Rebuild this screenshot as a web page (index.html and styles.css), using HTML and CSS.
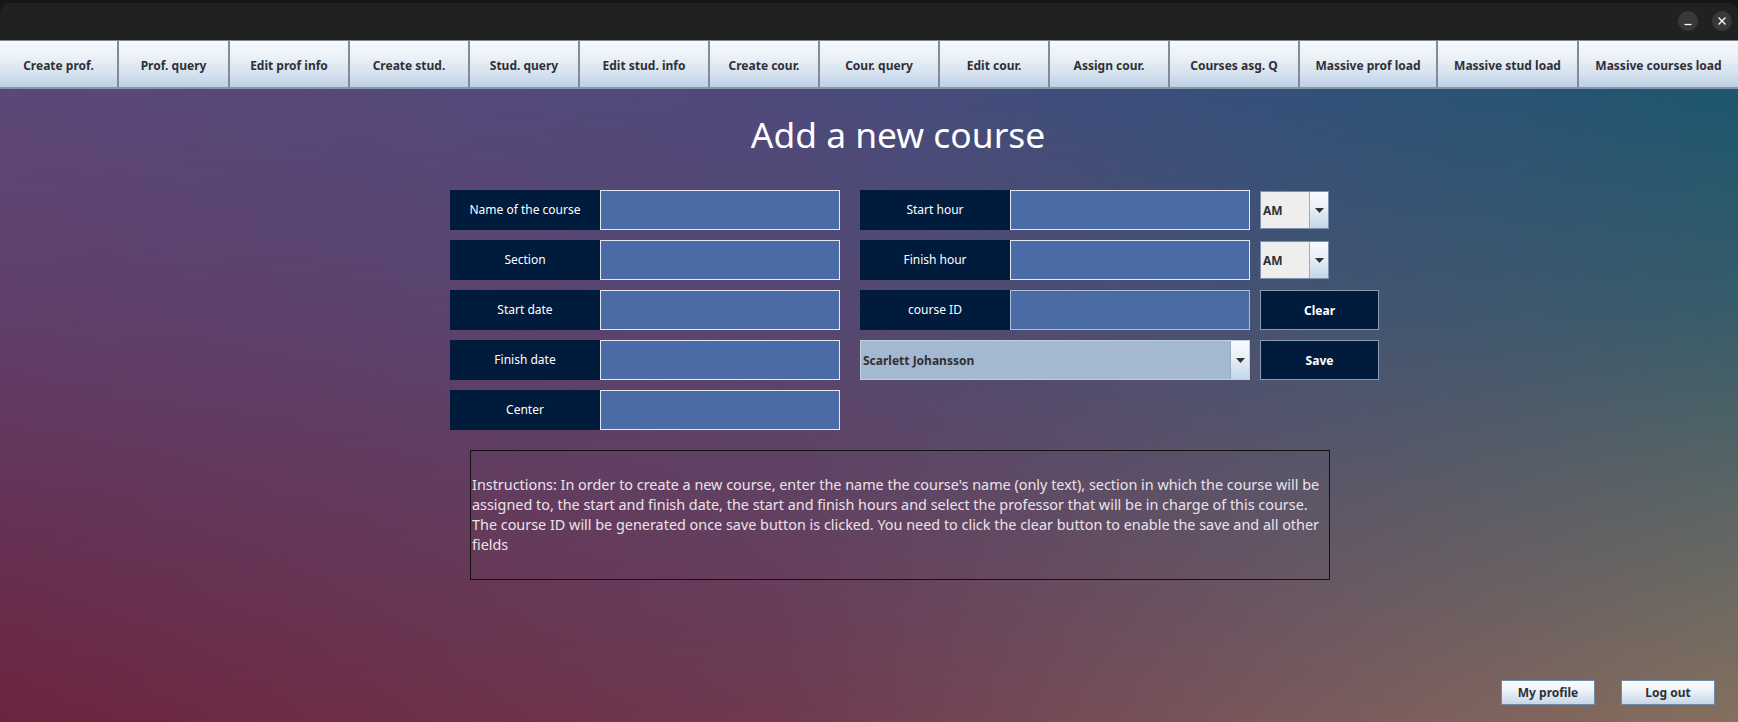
FILE: index.html
```html
<!DOCTYPE html>
<html lang="en">
<head>
<meta charset="utf-8">
<title>Add a new course</title>
<link rel="stylesheet" href="styles.css">
</head>
<body>
<div class="window">
  <header class="titlebar">
    <div class="titlebar-inner">
      <div class="win-controls">
        <span class="wc" aria-label="Minimize">
          <svg width="20" height="20" viewBox="0 0 20 20"><line x1="6.5" y1="13.5" x2="13.5" y2="13.5" stroke="#ffffff" stroke-width="1.3"/></svg>
        </span>
        <span class="wc" aria-label="Close">
          <svg width="20" height="20" viewBox="0 0 20 20"><path d="M6.5 6.5 L13.5 13.5 M13.5 6.5 L6.5 13.5" stroke="#ffffff" stroke-width="1.3" fill="none"/></svg>
        </span>
      </div>
    </div>
  </header>

  <nav class="tabs">
    <span class="tab">Create prof.</span>
    <span class="tab">Prof. query</span>
    <span class="tab">Edit prof info</span>
    <span class="tab">Create stud.</span>
    <span class="tab">Stud. query</span>
    <span class="tab">Edit stud. info</span>
    <span class="tab">Create cour.</span>
    <span class="tab">Cour. query</span>
    <span class="tab">Edit cour.</span>
    <span class="tab">Assign cour.</span>
    <span class="tab">Courses asg. Q</span>
    <span class="tab">Massive prof load</span>
    <span class="tab">Massive stud load</span>
    <span class="tab">Massive courses load</span>
  </nav>

  <main class="content">
    <h1 class="title">Add a new course</h1>

    <div class="form">
      <div class="grid-left">
        <div class="label">Name of the course</div>
        <div class="input"></div>
        <div class="label">Section</div>
        <div class="input"></div>
        <div class="label">Start date</div>
        <div class="input"></div>
        <div class="label">Finish date</div>
        <div class="input"></div>
        <div class="label">Center</div>
        <div class="input"></div>
      </div>

      <div class="grid-right">
        <div class="label">Start hour</div>
        <div class="input"></div>
        <div class="combo ampm side">
          <span class="combo-value">AM</span>
          <span class="combo-arrow"><svg width="9" height="5" viewBox="0 0 9 5"><path d="M0 0 H9 L4.5 5 Z" fill="#333333"/></svg></span>
        </div>

        <div class="label">Finish hour</div>
        <div class="input"></div>
        <div class="combo ampm side">
          <span class="combo-value">AM</span>
          <span class="combo-arrow"><svg width="9" height="5" viewBox="0 0 9 5"><path d="M0 0 H9 L4.5 5 Z" fill="#333333"/></svg></span>
        </div>

        <div class="label">course ID</div>
        <div class="input input-disabled"></div>
        <div class="dark-btn side">Clear</div>

        <div class="combo prof">
          <span class="combo-value">Scarlett Johansson</span>
          <span class="combo-arrow"><svg width="9" height="5" viewBox="0 0 9 5"><path d="M0 0 H9 L4.5 5 Z" fill="#333333"/></svg></span>
        </div>
        <div class="dark-btn side">Save</div>
      </div>
    </div>

    <div class="instructions">
      <p>Instructions: In order to create a new course, enter the name the course's name (only text), section in which the course will be<br>assigned to, the start and finish date, the start and finish hours and select the professor that will be in charge of this course.<br>The course ID will be generated once save button is clicked. You need to click the clear button to enable the save and all other<br>fields</p>
    </div>

    <div class="footer">
      <span class="light-btn">My profile</span>
      <span class="light-btn">Log out</span>
    </div>
  </main>
</div>
</body>
</html>
```

FILE: styles.css
```css
* {
  box-sizing: border-box;
}

html, body {
  margin: 0;
  padding: 0;
  background: #161616;
}

body {
  font-family: "Noto Sans", "DejaVu Sans", sans-serif;
  width: 1738px;
  height: 722px;
  overflow: hidden;
}

.window {
  display: flex;
  flex-direction: column;
  height: 722px;
}

/* ---------- title bar ---------- */
.titlebar {
  height: 40px;
  background: #161616;
  padding-top: 3px;
  flex: none;
}

.titlebar-inner {
  height: 37px;
  background: #212121;
  border-radius: 10px 10px 0 0;
  display: flex;
  justify-content: flex-end;
  align-items: center;
  padding-right: 6px;
  padding-bottom: 1px;
}

.win-controls {
  display: flex;
  gap: 14px;
}

.wc {
  width: 20px;
  height: 20px;
  border-radius: 50%;
  background: #383838;
  display: flex;
  align-items: center;
  justify-content: center;
}

.wc svg {
  display: block;
}

/* ---------- tabs ---------- */
.tabs {
  flex: none;
  display: grid;
  grid-template-columns: 119px 111px 120px 120px 110px 130px 110px 120px 110px 120px 130px 138px 141px 1fr;
  height: 49px;
  border-top: 1px solid #7c8996;
  border-bottom: 2px solid #8796a6;
  background: #7f8c99;
}

.tab {
  display: flex;
  align-items: center;
  justify-content: center;
  padding-top: 2px;
  font-weight: 700;
  font-size: 12px;
  color: #2f3036;
  background: linear-gradient(to bottom, #f6f9fd 0%, #eef3f9 30%, #d6e2ef 70%, #bdd1e6 100%);
  border-right: 2px solid #7f8c99;
  white-space: nowrap;
}

.tab:last-child {
  border-right: none;
}

/* ---------- content ---------- */
.content {
  flex: 1;
  display: flex;
  flex-direction: column;
  position: relative;
  isolation: isolate;
  background: linear-gradient(to right, #6c2540 0%, #6f3a50 45%, #7a5a5c 75%, #86705e 100%);
}

.content::before {
  content: "";
  position: absolute;
  inset: 0;
  z-index: -1;
  background: linear-gradient(to right, #5c4878 0%, #4e4a7c 45%, #35507a 72%, #1d566e 100%);
  -webkit-mask-image: linear-gradient(to bottom, #000 0%, rgba(0, 0, 0, 0.75) 35%, rgba(0, 0, 0, 0) 100%);
  mask-image: linear-gradient(to bottom, #000 0%, rgba(0, 0, 0, 0.75) 35%, rgba(0, 0, 0, 0) 100%);
}

.title {
  margin: 21px 0 0 0;
  padding-left: 58px;
  text-align: center;
  font-weight: 400;
  font-size: 35.4px;
  line-height: 48px;
  color: #ffffff;
}

/* ---------- form ---------- */
.form {
  margin: 32px 0 0 450px;
  display: flex;
  gap: 20px;
  align-items: flex-start;
}

.grid-left {
  display: grid;
  grid-template-columns: 150px 240px;
  grid-auto-rows: 40px;
  row-gap: 10px;
}

.grid-right {
  display: grid;
  grid-template-columns: 150px 240px 10px 119px;
  grid-auto-rows: 40px;
  row-gap: 10px;
}

.label {
  grid-column: 1;
  background: #011b3c;
  color: #ffffff;
  font-size: 12px;
  padding-bottom: 2px;
  display: flex;
  align-items: center;
  justify-content: center;
}

.input {
  grid-column: 2;
  background: #4a6ba5;
  border: 1px solid #e3e8f1;
}

.input-disabled {
  border-color: #a9c0da;
}

.side {
  grid-column: 4;
}

.combo {
  display: flex;
  border: 1px solid #7d92aa;
}

.combo-value {
  flex: 1;
  display: flex;
  align-items: center;
  padding-left: 2px;
  font-size: 12px;
  font-weight: 700;
  color: #2f3036;
}

.combo-arrow {
  width: 19px;
  flex: none;
  display: flex;
  align-items: center;
  justify-content: center;
  border-left: 1px solid #9aabbd;
  background: linear-gradient(to bottom, #f9fbfe 0%, #e8eff7 45%, #c3d5e8 100%);
}

.ampm {
  width: 69px;
  height: 38px;
  align-self: center;
}

.ampm .combo-value {
  background: #eeeeee;
}

.prof {
  grid-column: 1 / 3;
  background: #a4b8cf;
  border-color: #c3d0de;
}

.dark-btn {
  background: #011b3c;
  border: 1px solid #8a9cb1;
  color: #ffffff;
  font-size: 12px;
  font-weight: 700;
  display: flex;
  align-items: center;
  justify-content: center;
}

/* ---------- instructions ---------- */
.instructions {
  margin: 20px 0 0 470px;
  width: 860px;
  height: 130px;
  border: 1px solid #121212;
  display: flex;
  align-items: center;
  padding: 0 0 0 1px;
}

.instructions p {
  margin: 0;
  font-size: 14.4px;
  line-height: 20px;
  color: #ece3ea;
  white-space: nowrap;
}

/* ---------- footer ---------- */
.footer {
  margin-top: auto;
  display: flex;
  justify-content: flex-end;
  gap: 26px;
  padding: 0 23px 17px 0;
}

.light-btn {
  width: 94px;
  height: 25px;
  display: flex;
  align-items: center;
  justify-content: center;
  border: 1px solid #6f88a6;
  background: linear-gradient(to bottom, #fbfdff 0%, #eef3f9 40%, #c6d7ea 100%);
  font-size: 12px;
  font-weight: 700;
  color: #2f3036;
}
```
